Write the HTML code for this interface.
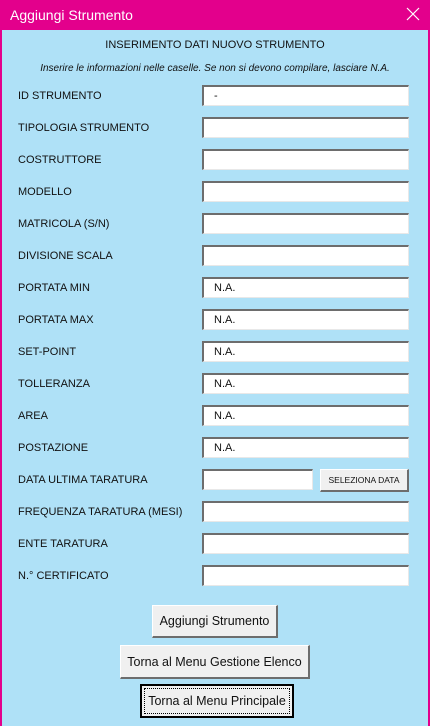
<!DOCTYPE html>
<html><head><meta charset="utf-8"><style>
*{margin:0;padding:0;box-sizing:border-box}
body{width:430px;height:726px;background:#afe1f7;font-family:"Liberation Sans",sans-serif;position:relative;overflow:hidden;color:#111}
.win{position:absolute;left:0;top:0;width:430px;height:726px;border-left:2px solid #e3008c;border-right:2px solid #e3008c;background:#afe1f7}
.tb{position:absolute;left:0;top:0;width:430px;height:30px;background:#e3008c;color:#fff;font-size:14px;line-height:30px;padding-left:10px}
.x{position:absolute;right:10px;top:7px;width:14px;height:14px}
.t{position:absolute;white-space:nowrap;font-size:11px}
.f{position:absolute;left:202px;width:207px;height:21px;background:#fff;border-top:2px solid #6d6d6d;border-left:2px solid #6d6d6d;border-right:1px solid #e8e8e8;border-bottom:1px solid #e8e8e8;font-size:11px;line-height:19px;padding-left:10px}
.b{position:absolute;background:#f0f0f0;border-top:1px solid #fff;border-left:1px solid #fff;border-right:2px solid #6d6d6d;border-bottom:2px solid #6d6d6d;text-align:center;font-size:12.5px;white-space:nowrap}
</style></head><body>
<div class="win"></div>
<div class="tb">Aggiungi Strumento<svg class="x" viewBox="0 0 14 14"><path d="M1 1L13 13M13 1L1 13" stroke="#fff" stroke-width="1.2"/></svg></div>
<div class="t" style="left:0;width:430px;text-align:center;top:39px;font-size:11px">INSERIMENTO DATI NUOVO STRUMENTO</div>
<div class="t" style="left:0;width:430px;text-align:center;top:63px;font-size:10px;font-style:italic">Inserire le informazioni nelle caselle. Se non si devono compilare, lasciare N.A.</div>

<div class="t" style="left:18px;top:90px">ID STRUMENTO</div><div class="f" style="top:85px">-</div>
<div class="t" style="left:18px;top:122px">TIPOLOGIA STRUMENTO</div><div class="f" style="top:117px"></div>
<div class="t" style="left:18px;top:154px">COSTRUTTORE</div><div class="f" style="top:149px"></div>
<div class="t" style="left:18px;top:186px">MODELLO</div><div class="f" style="top:181px"></div>
<div class="t" style="left:18px;top:218px">MATRICOLA (S/N)</div><div class="f" style="top:213px"></div>
<div class="t" style="left:18px;top:250px">DIVISIONE SCALA</div><div class="f" style="top:245px"></div>
<div class="t" style="left:18px;top:282px">PORTATA MIN</div><div class="f" style="top:277px">N.A.</div>
<div class="t" style="left:18px;top:314px">PORTATA MAX</div><div class="f" style="top:309px">N.A.</div>
<div class="t" style="left:18px;top:346px">SET-POINT</div><div class="f" style="top:341px">N.A.</div>
<div class="t" style="left:18px;top:378px">TOLLERANZA</div><div class="f" style="top:373px">N.A.</div>
<div class="t" style="left:18px;top:410px">AREA</div><div class="f" style="top:405px">N.A.</div>
<div class="t" style="left:18px;top:442px">POSTAZIONE</div><div class="f" style="top:437px">N.A.</div>
<div class="t" style="left:18px;top:474px">DATA ULTIMA TARATURA</div><div class="f" style="top:469px;width:111px"></div>
<div class="b" style="left:320px;top:469px;width:89px;height:23px;font-size:8.5px;line-height:21px">SELEZIONA DATA</div>
<div class="t" style="left:18px;top:506px">FREQUENZA TARATURA (MESI)</div><div class="f" style="top:501px"></div>
<div class="t" style="left:18px;top:538px">ENTE TARATURA</div><div class="f" style="top:533px"></div>
<div class="t" style="left:18px;top:570px">N.° CERTIFICATO</div><div class="f" style="top:565px"></div>

<div class="b" style="left:152px;top:605px;width:126px;height:33px;line-height:31px">Aggiungi Strumento</div>
<div class="b" style="left:120px;top:645px;width:190px;height:34px;line-height:32px">Torna al Menu Gestione Elenco</div>
<div class="b" style="left:140px;top:684px;width:154px;height:34px;line-height:30px;border:2px solid #000;outline:1px dotted #000;outline-offset:-5px">Torna al Menu Principale</div>
</body></html>
